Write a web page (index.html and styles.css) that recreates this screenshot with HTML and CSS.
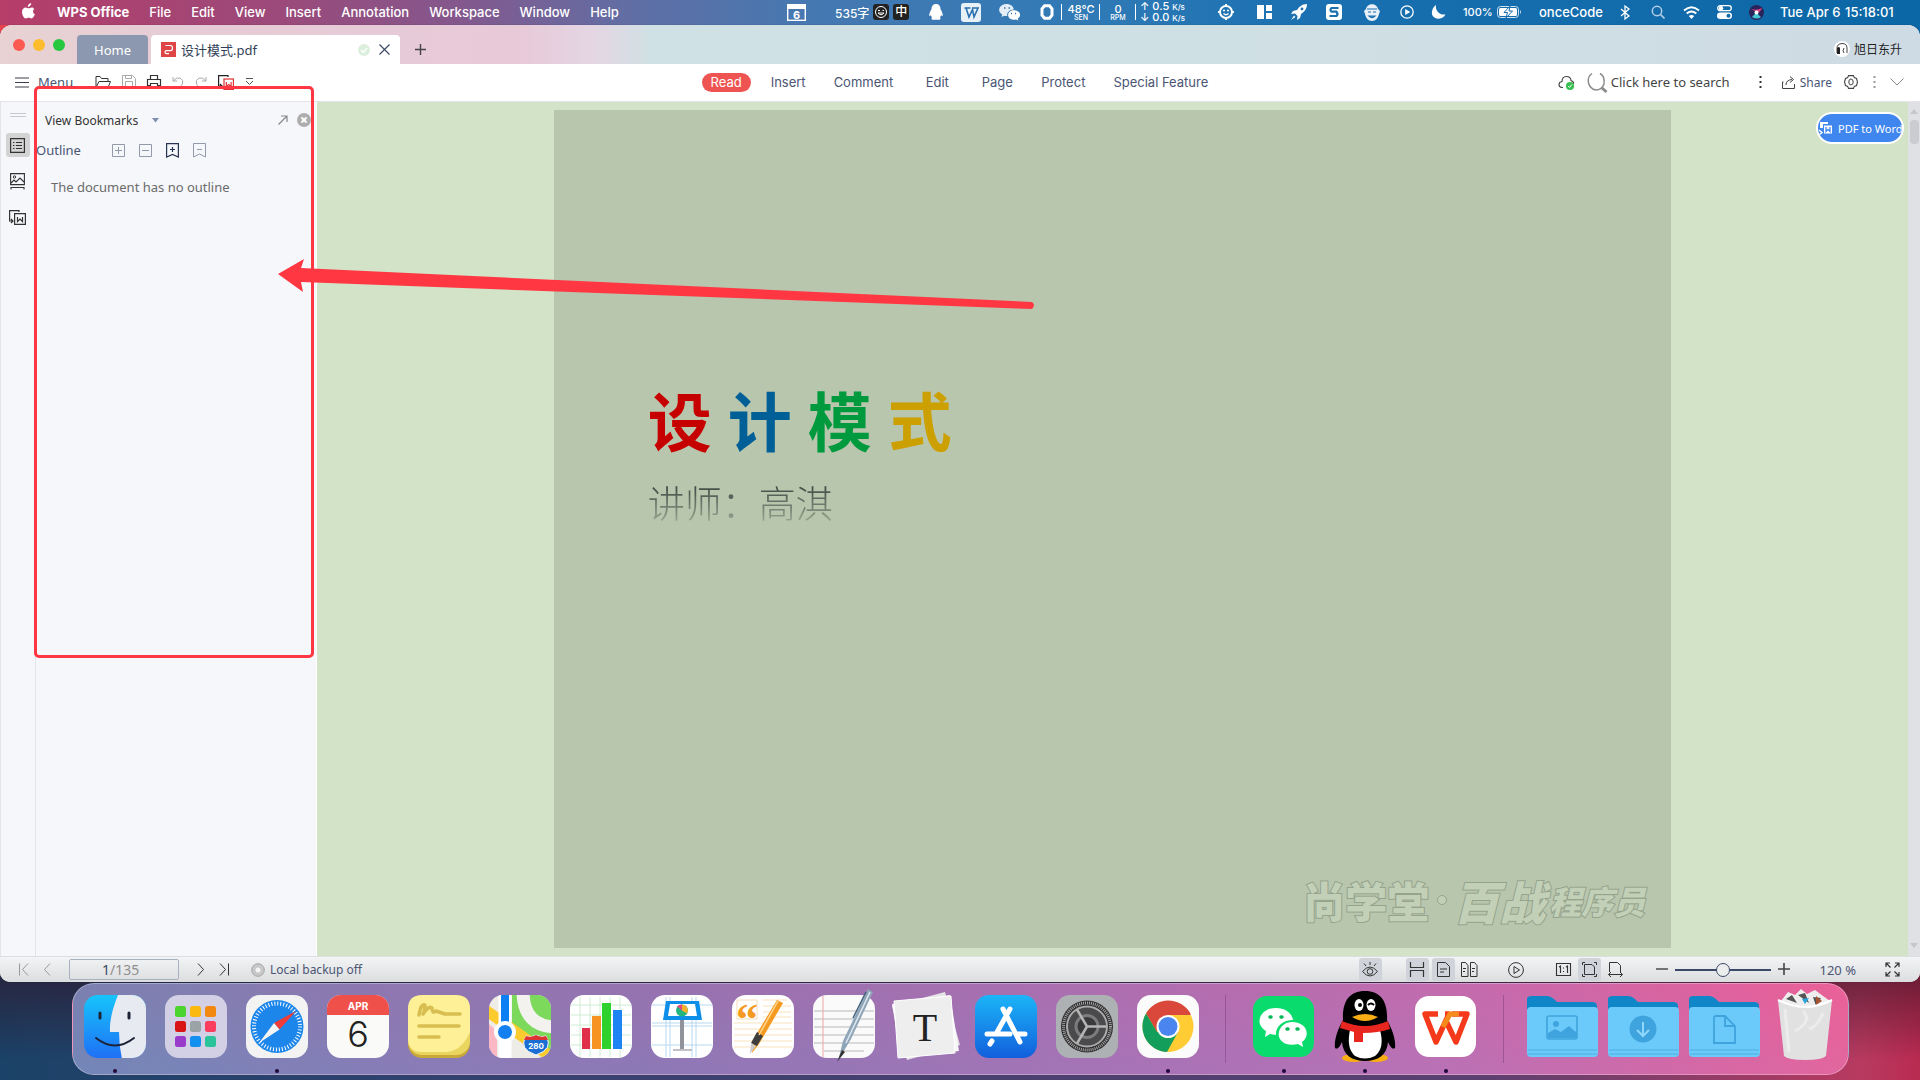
FILE: index.html
```html
<!DOCTYPE html>
<html lang="en">
<head>
<meta charset="utf-8">
<title>设计模式.pdf - WPS Office</title>
<link rel="stylesheet" href="styles.css">
</head>
<body>
<div class="desktop">
<header class="menubar">
  <nav class="app-menu">
    <svg class="apple" width="15" height="18" viewBox="0 0 15 18"><path fill="#fff" d="M10.2 0c.1 1-.3 1.900-.9 2.600C8.700 3.400 7.800 3.900 6.900 3.800c-.1-.9.300-1.900.9-2.500C8.400.600 9.400.100 10.200 0zM13.200 6c-1.800 1.200-1.600 4.200.6 5.200-.4 1.300-1.700 4.200-3.300 4.300-1.100 0-1.500-.7-2.800-.7s-1.700.7-2.800.7C2.900 15.500 1 11.900 1 9c0-3 1.900-4.600 3.700-4.600 1.200 0 2.100.8 3 .8.800 0 1.900-.9 3.300-.8.900 0 1.700.5 2.200 1.600z"/></svg>
    <b>WPS Office</b><span>File</span><span>Edit</span><span>View</span><span>Insert</span><span>Annotation</span><span>Workspace</span><span>Window</span><span>Help</span>
  </nav>
  <div class="tray">
    <svg width="19" height="17" viewBox="0 0 19 17"><rect x=".7" y=".7" width="17.600" height="15.600" fill="none" stroke="#fff" stroke-width="1.400"/><path fill="#fff" d="M1 1h17v4H1z"/><text x="9.500" y="14.500" class="cal-num">6</text></svg>
    <span class="words">535字<svg width="16" height="16" viewBox="0 0 16 16"><rect width="16" height="16" rx="3" fill="#222"/><circle cx="8" cy="8" r="5.500" fill="none" stroke="#fff"/><path d="M5 6.500h2M9.500 6.500h1.500M5 9q3 3.500 6 0z" stroke="#fff" fill="none"/></svg><i>中</i></span>
    <svg width="14" height="16" viewBox="0 0 14 16"><path fill="#fff" d="M7 0c3 0 4.500 2 4.500 5 1 2 2.500 4.500 2.300 6.500-.4.800-1 .3-1.600-.6-.2 1.300-.8 2-1.300 2.600 1 .6.900 2.300-.9 2.300H4c-1.800 0-1.900-1.700-.9-2.300-.5-.6-1.100-1.300-1.300-2.600-.6.900-1.200 1.400-1.600.6C0 9.500 1.500 7 2.500 5 2.500 2 4 0 7 0z"/></svg>
    <svg width="20" height="19" viewBox="0 0 20 19"><rect width="20" height="19" rx="3" fill="#e9f1f8"/><path d="M3.500 5h6M5 5l3 9 3.500-7.500L13 14l4-9h-6" fill="none" stroke="#286fae" stroke-width="1.600"/></svg>
    <svg width="21" height="17" viewBox="0 0 21 17"><path fill="#e5eef7" d="M7.500 0c4 0 7 2.500 7.300 5.400-4 0-7.200 2.800-6.600 6.600-1 .2-2 0-3-.3L2.500 13l.7-2.400C-2.500 7 .3 0 7.500 0z"/><path fill="#fff" d="M14.500 6.300c7 0 8.500 5.700 4.300 8.200l.5 2-2.300-1c-10 2-10-9.200-2.500-9.200z"/><path d="M5 4h1.500M9.500 4H11M12 9.500h1M16 9.500h1" stroke="#3778b4" stroke-width="1.500"/></svg>
    <svg width="14" height="16" viewBox="0 0 14 16"><path d="M4.500 1.700h5l2.500 3v6.500l-2.500 3h-5l-2.500-3V4.700z" fill="none" stroke="#fff" stroke-width="3"/></svg>
    <span class="meter"><b>48°C</b><small>SEN</small></span>
    <span class="meter"><b>0</b><small>RPM</small></span>
    <span class="meter net"><b>↑ 0.5 <em>K/s</em></b><b>↓ 0.0 <em>K/s</em></b></span>
    <svg width="16" height="16" viewBox="0 0 16 16"><circle cx="8" cy="8" r="6" fill="none" stroke="#fff" stroke-width="2"/><path d="M8 0v3M8 13v3M0 8h3M13 8h3" stroke="#fff" stroke-width="2"/><path d="M5 6.500h2M9 6.500h2M5.500 9.500q2.500 2.500 5 0" stroke="#fff" fill="none" stroke-width="1.300"/></svg>
    <svg width="15" height="14" viewBox="0 0 15 14"><path fill="#fff" d="M0 0h7v14H0zM9 0h6v6H9zM9 8h6v6H9z"/></svg>
    <svg width="16" height="16" viewBox="0 0 16 16"><path fill="#fff" d="M16 0c-5 0-8 3-10 6L2 7l-2 3 4-.5L6.500 12 6 16l3-2 1-4c3-2 6-5 6-10zM3 11.500L0 16l4.500-3z"/><circle cx="11" cy="5" r="1.400" fill="#2071b1"/></svg>
    <svg width="16" height="16" viewBox="0 0 16 16"><rect width="16" height="16" rx="3" fill="#fff"/><path d="M12.500 4H5.500Q3.500 6 5.500 7.700h5Q12.500 10 10.500 12H3.500" fill="none" stroke="#1c70b0" stroke-width="2.200"/></svg>
    <svg width="16" height="17" viewBox="0 0 16 17"><path fill="#e8f1f8" d="M2 5C3-1.500 13-1.500 14 5l2 2-1 3c-1 4-3 7-7 7s-6-3-7-7L0 7z"/><path d="M3 5h10M4 8h3M9 8h3M5 12q3 3 6 0z" fill="none" stroke="#1c70b0" stroke-width="1.200"/></svg>
    <svg width="14" height="14" viewBox="0 0 14 14"><circle cx="7" cy="7" r="6.200" fill="none" stroke="#fff" stroke-width="1.300"/><path fill="#fff" d="M5.200 4l5 3-5 3z"/></svg>
    <svg width="14" height="14" viewBox="0 0 14 14"><path fill="#fff" d="M4 0C3 5 7 10.500 13.500 9.500 9 17-3 14 .5 4.500 1.300 2.500 2.500 1 4 0z"/></svg>
    <span class="small">100%</span>
    <svg width="25" height="12" viewBox="0 0 25 12"><rect x=".5" y=".5" width="21" height="11" rx="3" fill="none" stroke="#cfe1ef"/><rect x="2" y="2" width="18" height="8" rx="1.500" fill="#fff"/><path d="M13 0L7 6.500h3.500L9 12l6.500-7H12z" fill="#fff" stroke="#176cad"/><path d="M23 4v4q2-2 0-4" fill="#cfe1ef"/></svg>
    <span>onceCode</span>
    <svg width="10" height="15" viewBox="0 0 10 15"><path d="M1 4l8 7-4 3V1l4 3-8 7" fill="none" stroke="#fff" stroke-width="1.300"/></svg>
    <svg width="14" height="14" viewBox="0 0 14 14"><circle cx="6" cy="6" r="4.700" fill="none" stroke="#b5d0e5" stroke-width="1.500"/><path d="M9.500 9.500l4 4" stroke="#b5d0e5" stroke-width="1.700"/></svg>
    <svg width="17" height="13" viewBox="0 0 17 13"><path d="M1 4.500q7.500-6.500 15 0M3.700 7.500q4.800-4 9.600 0" fill="none" stroke="#fff" stroke-width="2"/><path fill="#fff" d="M5.800 10q2.700-2 5.400 0L8.500 13z"/></svg>
    <svg width="15" height="14" viewBox="0 0 15 14"><rect x=".7" y=".7" width="13.600" height="5" rx="2.500" fill="none" stroke="#fff" stroke-width="1.300"/><circle cx="4" cy="3.200" r="2.200" fill="#fff"/><rect y="7.500" width="15" height="6.500" rx="3.200" fill="#fff"/><circle cx="11.500" cy="10.700" r="2" fill="#1069a9"/></svg>
    <svg width="15" height="15" viewBox="0 0 15 15"><circle cx="7.500" cy="7.500" r="7.500" fill="#29245b"/><path d="M2 4q6 2 11-1-2 5-5 4z" fill="#e64482"/><path d="M3 12q3-3 4.500-5Q9 10 12 12q-4 3-9 0z" fill="#45c8d4"/><circle cx="7.500" cy="7.500" r="2" fill="#fff"/></svg>
    <span>Tue Apr 6</span><span>15:18:01</span>
  </div>
</header>

<main class="window">
  <div class="tabs">
    <div class="lights"><i class="close"></i><i class="min"></i><i class="max"></i></div>
    <button class="tab home">Home</button>
    <div class="tab current">
      <svg width="15" height="15" viewBox="0 0 15 15"><rect width="15" height="15" fill="#e04545"/><path d="M4.500 3.500h5q2 0 2 2.600t-2 2.600H5.500q-1.500 0-1.500 1.500t1.500 1.500H8" fill="none" stroke="#fff" stroke-width="1.200"/></svg>
      <span>设计模式.pdf</span>
      <svg class="ok" width="12" height="12" viewBox="0 0 12 12"><circle cx="6" cy="6" r="6" fill="#dcefdc"/><path d="M3 6l2.300 2.300L9 4" fill="none" stroke="#fff" stroke-width="1.400"/></svg>
      <button class="icon" aria-label="Close tab"><svg width="11" height="11" viewBox="0 0 11 11"><path d="M.5.5l10 10M10.500.5l-10 10" stroke="#3d4966" stroke-width="1.200"/></svg></button>
    </div>
    <button class="icon plus" aria-label="New tab"><svg width="11" height="11" viewBox="0 0 11 11"><path d="M5.500 0v11M0 5.500h11" stroke="#444" stroke-width="1.400"/></svg></button>
    <div class="user"><svg width="16" height="16" viewBox="0 0 16 16"><circle cx="8" cy="8" r="8" fill="#fff"/><path d="M3 12V7q0-4 5-4.500 5 0 5 4.500v5M10 12q-2-2 0-5" stroke="#444" fill="none"/><path d="M3 7q2-2 3 0v6H3z" fill="#222"/></svg>旭日东升</div>
  </div>

  <div class="toolbar">
    <div class="quick">
      <button class="icon menu"><svg width="14" height="11" viewBox="0 0 14 11"><path d="M0 1h14M0 5.500h14M0 10h14" stroke="#3b3f4a" stroke-width="1.200"/></svg>Menu</button>
      <button class="icon" aria-label="Open"><svg width="16" height="14" viewBox="0 0 16 14"><path d="M1 12.500V1.500h4l1.500 2H13v3M1 12.500L4 6.500h11.500L13 12.500z" fill="none" stroke="#333"/></svg></button>
      <button class="icon" aria-label="Save"><svg width="14" height="14" viewBox="0 0 14 14"><path d="M.5 13.500V.5h10l3 3v10zM3.500 13V6.500h7V13M3.500.5v3h6v-3" fill="none" stroke="#aaa"/></svg></button>
      <button class="icon" aria-label="Print"><svg width="14" height="14" viewBox="0 0 14 14"><path d="M3.500 4V.5h7V4M3 10.500H.5v-6h13v6H11M3.500 8.500h7v5h-7z" fill="none" stroke="#333" stroke-width="1.200"/></svg></button>
      <button class="icon" aria-label="Undo"><svg width="12" height="12" viewBox="0 0 12 12"><path d="M1 1v4h4M1 5q3-4 7-3 4 2 2.500 6L8 11" fill="none" stroke="#aaa"/></svg></button>
      <button class="icon" aria-label="Redo"><svg width="12" height="12" viewBox="0 0 12 12"><path d="M11 1v4H7M11 5Q8 1 4 2 0 4 1.500 8L4 11" fill="none" stroke="#aaa"/></svg></button>
      <button class="icon" aria-label="PDF to Word"><svg width="16" height="15" viewBox="0 0 16 15"><path d="M10 2V.6H.6V11H4M2 9l2 2-2 2" fill="none" stroke="#222" stroke-width="1.200"/><rect x="6" y="4" width="9.400" height="10.400" fill="#fff" stroke="#d33" stroke-width="1.200"/><path d="M8.300 7v4.500l2.400-2 2.400 2V7" fill="none" stroke="#d33" stroke-width="1.200"/></svg></button>
      <button class="icon" aria-label="More"><svg width="9" height="8" viewBox="0 0 9 8"><path d="M1 .5h7M1 3l3.500 3.500L8 3" fill="none" stroke="#555"/></svg></button>
    </div>
    <nav class="ribbon">
      <button class="on">Read</button><button>Insert</button><button>Comment</button><button>Edit</button><button>Page</button><button>Protect</button><button>Special Feature</button>
    </nav>
    <div class="tools">
      <svg width="17" height="15" viewBox="0 0 17 15"><path d="M5 12.500H4C0 12 0 7 4 6.500 4 0 12.500 0 13 5.500q3 1 2.500 3.500" fill="none" stroke="#444" stroke-width="1.100"/><circle cx="12" cy="11" r="4" fill="#35c050"/><path d="M10.200 11l1.300 1.500 2.400-3" stroke="#fff" fill="none"/></svg>
      <label class="search"><svg width="21" height="21" viewBox="0 0 21 21"><path d="M5 1.500Q0 5 1.500 11t7.500 7q6 0 8-6 1-8-4-10.500" fill="none" stroke="#8b8b8b" stroke-width="1.500"/><path d="M15 16l4.500 4" stroke="#8b8b8b" stroke-width="3"/></svg><input type="text" value="Click here to search"></label>
      <svg class="dots" width="3" height="14" viewBox="0 0 3 14"><path d="M1.500 1v12" stroke="#333" stroke-width="2" stroke-dasharray="2 3"/></svg>
      <button class="icon share"><svg width="14" height="13" viewBox="0 0 14 13"><path d="M1.500 6H.5v6.500h12V8M4 9q0-5 6-5.500M8 .5l3.500 3L8 6.500" fill="none" stroke="#444"/></svg>Share</button>
      <button class="icon" aria-label="Settings"><svg width="14" height="14" viewBox="0 0 14 14"><path d="M4.500.6h5l.8 2 2.200.9 1 3.500-1 3.500-2.200.9-.8 2h-5l-.8-2-2.200-.9-1-3.500 1-3.500 2.200-.9z" fill="none" stroke="#444" stroke-width="1.100"/><ellipse cx="7" cy="7" rx="2.200" ry="3" fill="none" stroke="#444"/></svg></button>
      <svg class="more" width="3" height="12" viewBox="0 0 3 12"><path d="M1.500 0v12" stroke="#999" stroke-width="2" stroke-dasharray="2 3"/></svg>
      <button class="icon" aria-label="Collapse"><svg width="14" height="8" viewBox="0 0 14 8"><path d="M.5.5L7 7 13.500.5" fill="none" stroke="#888"/></svg></button>
    </div>
  </div>

  <div class="content">
    <aside class="rail">
      <svg class="grip" width="16" height="4" viewBox="0 0 16 4"><path d="M0 .5h16M0 3.500h16" stroke="#c6c9cf"/></svg>
      <button class="icon on" aria-label="Bookmarks"><svg width="15" height="15" viewBox="0 0 15 15"><path d="M.6.6h13.800v13.800H.6zM3 4.500h1.500M6 4.500h6M3 7.500h1.500M6 7.500h6M3 10.500h1.500M6 10.500h6" fill="none" stroke="#333" stroke-width="1.200"/></svg></button>
      <button class="icon" aria-label="Thumbnails"><svg width="15" height="17" viewBox="0 0 15 17"><path d="M.6.600h13.800v11H.6zM1 10l3-3 2 2 4-4 4 4M1 16.500v-2h13v2" fill="none" stroke="#333" stroke-width="1.100"/><circle cx="4.500" cy="4" r="1.200" fill="none" stroke="#333"/></svg></button>
      <button class="icon" aria-label="Convert"><svg width="17" height="15" viewBox="0 0 17 15"><path d="M10 2V.6H.6V11H4M2 9l2 2-2 2M5.600 3.600h10.800v10.800H5.600zM8.500 7v4.500l2.500-2.500 2.500 2.500V7" fill="none" stroke="#333" stroke-width="1.200"/></svg></button>
    </aside>
    <aside class="panel">
      <div class="panel-head">
        <span>View Bookmarks</span>
        <svg class="caret" width="7" height="5" viewBox="0 0 7 5"><path d="M0 0h7L3.500 4.500z" fill="#7f8fb0"/></svg>
        <svg class="pop" width="10" height="10" viewBox="0 0 10 10"><path d="M.5 9.500l8-8M3 1h6v6" fill="none" stroke="#888" stroke-width="1.200"/></svg>
        <svg width="14" height="14" viewBox="0 0 14 14"><circle cx="7" cy="7" r="7" fill="#aeaeae"/><path d="M4.500 4.500l5 5M9.500 4.500l-5 5" stroke="#fff" stroke-width="2"/></svg>
      </div>
      <div class="panel-tools">
        <span>Outline</span>
        <button class="icon" aria-label="Expand"><svg width="13" height="13" viewBox="0 0 13 13"><path d="M.5.5h12v12H.5zM6.500 3v7M3 6.500h7" fill="none" stroke="#9299a8"/></svg></button>
        <button class="icon" aria-label="Collapse"><svg width="13" height="13" viewBox="0 0 13 13"><path d="M.5.5h12v12H.5zM3 6.500h7" fill="none" stroke="#9299a8"/></svg></button>
        <button class="icon" aria-label="Add bookmark"><svg width="13" height="15" viewBox="0 0 13 15"><path d="M.600.600h11.800v13.400L6.500 11.500.6 14zM6.500 4v5M4 6.500h5" fill="none" stroke="#283453" stroke-width="1.200"/></svg></button>
        <button class="icon" aria-label="Remove bookmark"><svg width="13" height="15" viewBox="0 0 13 15"><path d="M.5.5h12V14l-6-3-6 3zM4 6.500h5" fill="none" stroke="#9299a8"/></svg></button>
      </div>
      <p>The document has no outline</p>
    </aside>
    <section class="viewer">
      <article class="sheet">
        <div>
          <h1><span class="c1">设</span><span class="c2">计</span><span class="c3">模</span><span class="c4">式</span></h1>
          <h2>讲师：高淇</h2>
        </div>
        <div class="mark"><span>尚学堂</span><i class="dot"></i><em>百战</em><em class="lesser">程序员</em></div>
      </article>
      <button class="convert"><svg width="16" height="15" viewBox="0 0 16 15"><path d="M2 7V1h8v2H5v4z" fill="#fff"/><path d="M1 9l3 2.500L1 14" fill="none" stroke="#fff" stroke-width="1.400"/><path d="M5.500 4h9v9h-9z" fill="#fff" stroke="#3f86ee"/><path d="M8 6v4.500l2-2 2 2V6" fill="none" stroke="#3f86ee" stroke-width="1.300"/></svg>PDF to Word</button>
    </section>
    <div class="scroll">
      <svg width="8" height="5" viewBox="0 0 8 5"><path d="M0 5l4-5 4 5z" fill="#c6c7cb"/></svg>
      <i></i>
      <svg width="8" height="5" viewBox="0 0 8 5"><path d="M0 0l4 5 4-5z" fill="#c6c7cb"/></svg>
    </div>
  </div>

  <footer class="status">
    <button class="icon" aria-label="First page"><svg width="10" height="13" viewBox="0 0 10 13"><path d="M.5.5v12M9 .5l-5.500 6 5.500 6" fill="none" stroke="#999"/></svg></button>
    <button class="icon prev" aria-label="Previous page"><svg width="8" height="13" viewBox="0 0 8 13"><path d="M7 .5l-5.500 6 5.500 6" fill="none" stroke="#999"/></svg></button>
    <label class="pager"><input type="text" value="1" aria-label="Page"><span>/135</span></label>
    <button class="icon next" aria-label="Next page"><svg width="8" height="13" viewBox="0 0 8 13"><path d="M1 .5l5.500 6-5.500 6" fill="none" stroke="#333"/></svg></button>
    <button class="icon last" aria-label="Last page"><svg width="10" height="13" viewBox="0 0 10 13"><path d="M9.500.5v12M1 .5l5.500 6-5.500 6" fill="none" stroke="#333"/></svg></button>
    <svg class="disc" width="14" height="14" viewBox="0 0 14 14"><circle cx="7" cy="7" r="6.300" fill="#c8c8c8" stroke="#a5a5a5"/><circle cx="7" cy="7" r="2.500" fill="#f4f4f4"/></svg>
    <span>Local backup off</span>
    <div class="views">
      <button class="icon on" aria-label="Eye care"><svg width="16" height="15" viewBox="0 0 16 15"><path d="M.5 9.500q7.500-9 15 0-7.500 9-15 0zM8 0v3M2 1.500l2 2.500M14 1.500L12 4" fill="none" stroke="#333"/><circle cx="8" cy="9.500" r="2.800" fill="none" stroke="#333"/></svg></button>
      <button class="icon on" aria-label="Continuous"><svg width="14" height="15" viewBox="0 0 14 15"><path d="M.5 0v5.500h13V0M.5 15V8.500h13V15" fill="none" stroke="#333" stroke-width="1.200"/></svg></button>
      <button class="icon on" aria-label="Single page"><svg width="13" height="15" viewBox="0 0 13 15"><path d="M.5.500h8l4 4v10H.5zM3 7h7M3 10h4" fill="none" stroke="#333"/></svg></button>
      <button class="icon" aria-label="Two pages"><svg width="17" height="15" viewBox="0 0 17 15"><path d="M.5.500h4l2.500 3v11H.5zM9.500.500h4l2.500 3v11H9.500zM2 6.500h3M2 9.500h2M11 6.500h3M11 9.500h2" fill="none" stroke="#333"/></svg></button>
      <button class="icon" aria-label="Play"><svg width="16" height="16" viewBox="0 0 16 16"><circle cx="8" cy="8" r="7.400" fill="none" stroke="#333"/><path d="M6 4.500l5.500 3.500L6 11.500z" fill="none" stroke="#333"/></svg></button>
      <button class="icon" aria-label="Actual size"><svg width="15" height="13" viewBox="0 0 15 13"><path d="M.5.500h14v12H.5zM3 4l1.500-1v7M10 4l1.500-1v7M7.500 4.500v1M7.500 8v1" fill="none" stroke="#333" stroke-width="1.100"/></svg></button>
      <button class="icon on" aria-label="Fit page"><svg width="15" height="15" viewBox="0 0 15 15"><path d="M2.500 2.500h7.500l2.500 2.500v7.500h-10zM.5 3V.5H3M12 .5h2.500V3M14.500 12v2.500H12M3 14.500H.5V12" fill="none" stroke="#333"/></svg></button>
      <button class="icon" aria-label="Fit width"><svg width="15" height="15" viewBox="0 0 15 15"><path d="M1.500 10V.5h8l3 3V10M.5 12.500h14M3 10l-2.500 2.500L3 15M12 10l2.500 2.500L12 15" fill="none" stroke="#333"/></svg></button>
      <button class="icon" aria-label="Zoom out"><svg width="12" height="12" viewBox="0 0 12 12"><path d="M0 5h12" stroke="#555" stroke-width="1.600"/></svg></button>
      <input type="range" min="0" max="100" value="50" aria-label="Zoom">
      <button class="icon" aria-label="Zoom in"><svg width="12" height="12" viewBox="0 0 12 12"><path d="M0 5h12M6-1v12" stroke="#444" stroke-width="1.600"/></svg></button>
      <span>120 %</span>
      <button class="icon" aria-label="Full screen"><svg width="15" height="15" viewBox="0 0 15 15"><path d="M1 5V1h4M1 1l4.500 4.500M10 1h4v4M14 1L9.500 5.500M1 10v4h4M1 14l4.500-4.500M14 10v4h-4M14 14L9.500 9.500" fill="none" stroke="#333" stroke-width="1.200"/></svg></button>
    </div>
  </footer>
</main>

<div class="dock">
  <div class="app run"><svg viewBox="0 0 64 64"><defs><linearGradient id="fb" x2="0" y2="1"><stop stop-color="#17c4fb"/><stop offset="1" stop-color="#1f6ff5"/></linearGradient><clipPath id="sq"><rect x="1" width="62" height="63" rx="14"/></clipPath></defs><g clip-path="url(#sq)"><path fill="url(#fb)" d="M0 0h64v64H0z"/><path fill="#e7eaf1" d="M35 0Q26 22 27 37h9q0 14 3 27h25V0z"/></g><path d="M17 18v5M46 18v5" stroke="#1d2438" stroke-width="3" stroke-linecap="round"/><path d="M13 43q19 15 38 0" fill="none" stroke="#1d2438" stroke-width="2" stroke-linecap="round"/></svg></div>
  <div class="app"><svg viewBox="0 0 64 64"><rect x="1" width="62" height="63" rx="14" fill="#d3cfe4"/><g><rect x="11" y="11" width="11" height="11" rx="2.500" fill="#4bd32f"/><rect x="26" y="11" width="11" height="11" rx="2.500" fill="#fbb90d"/><rect x="41" y="11" width="11" height="11" rx="2.500" fill="#f2880f"/><rect x="11" y="26" width="11" height="11" rx="2.500" fill="#d81414"/><rect x="26" y="26" width="11" height="11" rx="2.500" fill="#9ba3a6"/><rect x="41" y="26" width="11" height="11" rx="2.500" fill="#fb3d5f"/><rect x="11" y="41" width="11" height="11" rx="2.500" fill="#9a3ccb"/><rect x="26" y="41" width="11" height="11" rx="2.500" fill="#1190ef"/><rect x="41" y="41" width="11" height="11" rx="2.500" fill="#2bc39a"/></g></svg></div>
  <div class="app run"><svg viewBox="0 0 64 64"><rect x="1" width="62" height="63" rx="14" fill="#f3f3f4"/><circle cx="32" cy="31.500" r="26.500" fill="#1c86ea"/><circle cx="32" cy="31.500" r="23" fill="none" stroke="#fff" stroke-width="4" stroke-dasharray="1 2"/><path fill="#ef3c38" d="M51 16L29 28l5.500 6.500z"/><path fill="#f4f4f4" d="M14 48l15-20 5.500 6.500z"/></svg></div>
  <div class="app"><svg viewBox="0 0 64 64"><g clip-path="url(#sq)"><path fill="#fafaf8" d="M0 0h64v64H0z"/><path fill="#f0504a" d="M0 0h64v20H0z"/></g><text x="32" y="15" class="apr">APR</text><text x="32" y="52" class="day">6</text></svg></div>
  <div class="app"><svg viewBox="0 0 64 64"><rect x="1" y="2" width="62" height="61" rx="14" fill="#c9a83a"/><rect x="1" y="1" width="62" height="59" rx="14" fill="#ead55f"/><path d="M15 0h34q14 0 14 14v23q-8 19-24 20H15Q1 57 1 43V14Q1 0 15 0z" fill="#fdf096"/><path d="M12 20q2-12 6-10 0 6-2 9 6-9 9-6 0 6 4 3l9 3h15M12 31h40M12 42h20" fill="none" stroke="#d8bd50" stroke-width="3.500" stroke-linecap="round" stroke-linejoin="round"/></svg></div>
  <div class="app"><svg viewBox="0 0 64 64"><g clip-path="url(#sq)"><path fill="#eeece6" d="M0 0h64v64H0z"/><path fill="#7cd95b" d="M24 0h40v64L24 32z"/><path d="M35-4q0 36 34 36" fill="none" stroke="#f3f2ef" stroke-width="13"/><path d="M-4 14l70 50" stroke="#fccb2d" stroke-width="11"/><path fill="#fbb8c4" d="M0 28l9 8v28H0z"/><path d="M17 0v64" stroke="#fff" stroke-width="13"/><path d="M17 0v36" stroke="#0c7ff2" stroke-width="8"/></g><circle cx="17" cy="37" r="9" fill="#1480f0" stroke="#fff" stroke-width="4"/><path d="M38 41q5 2 10-1 5 3 10 1 8 13-10 19-18-6-10-19z" fill="#1b6fd3" stroke="#fff"/><path fill="#dc3434" d="M38 41q5 2 10-1 5 3 10 1l2 4H36z"/><text x="48" y="54" class="road">280</text></svg></div>
  <div class="app"><svg viewBox="0 0 64 64"><rect x="1" width="62" height="63" rx="14" fill="#fff"/><path d="M2 10h60M2 20h60M2 30h60M2 40h60M2 50h60M11 2v60M21 2v60M31 2v60M41 2v60M51 2v60" stroke="#cdecd0"/><path fill="#e02f49" d="M13 33h8v21h-8z"/><path fill="#f79320" d="M23 21h9v33h-9z"/><path fill="#2fd22c" d="M33 8h9v46h-9z"/><path fill="#1e83f3" d="M44 15h9v39h-9z"/></svg></div>
  <div class="app"><svg viewBox="0 0 64 64"><rect x="1" width="62" height="63" rx="14" fill="#fff"/><path d="M2 10h60M2 28h60M2 31h60M2 50h60M16 2v60M20 2v60M42 2v60M46 2v60" stroke="#b7d8ef"/><path fill="#90939a" d="M30 25h4v29h-4z"/><path fill="#bfc1c6" d="M23 54h19v2H23z"/><path fill="#0d8ee9" d="M16 6h33l3 19H13z"/><path fill="#fff" d="M20 9h25l2 12H18z"/><circle cx="32" cy="15.500" r="6" fill="#24b47e"/><path fill="#f5b02d" d="M32 15.500v-6a6 6 0 0 1 5 9z"/><path fill="#e44a7c" d="M32 15.500l-5-4a6 6 0 0 1 5-2z"/></svg></div>
  <div class="app"><svg viewBox="0 0 64 64"><rect x="1" width="62" height="63" rx="14" fill="#fff"/><path d="M3 28h58M3 34h58M3 40h58M3 46h58M3 52h58M32 5h24M32 11h28M32 17h28M32 22h28" stroke="#fae2bd"/><path d="M6 5h20v19H6z" fill="none" stroke="#f7dcb8"/><text x="16" y="39" class="quote">“</text><path d="M46 5l6 3-24 41-7 9 1-13z" fill="#f59a20"/><path d="M26 37l6 4-6 10-6-3z" fill="#3d3d3d"/><path d="M20 48l5 3-6 8z" fill="#ccc"/><path d="M47 6L28 40" stroke="#ffd78f" stroke-width="1.500"/></svg></div>
  <div class="app"><svg viewBox="0 0 64 64"><rect x="1" width="62" height="63" rx="14" fill="#fafafa"/><path d="M2 16h60M2 24h60M2 32h60M2 40h60M2 48h60M12 56h40" stroke="#b9b9b9"/><path d="M11 1v61" stroke="#f0a5a5"/><path d="M56-6l5 3-22 47-13 22 5-20z" fill="#8fa5b8"/><path d="M58-3L34 48" stroke="#dfe8ef" stroke-width="1.500"/><path d="M30 55l3 2-8 10z" fill="#333"/><path d="M54-3L41 23" stroke="#47647e" stroke-width="1.500"/></svg></div>
  <div class="app"><svg viewBox="0 0 64 64"><path fill="#e4e4e6" d="M-1 11l53-14 15 53-53 15z"/><path fill="#f7f7f7" d="M-1 9L57 0l9 56-58 7z"/><path fill="#eee" stroke="#fff" d="M1 6l57-5 4 57-57 5z"/><text x="32" y="46" class="tee">T</text></svg></div>
  <div class="app"><svg viewBox="0 0 64 64"><defs><linearGradient id="as" x2="0" y2="1"><stop stop-color="#1bb5f8"/><stop offset="1" stop-color="#125fdc"/></linearGradient></defs><rect x="1" width="62" height="63" rx="14" fill="url(#as)"/><path d="M36 14L22 39M29 14l17 33M13 39h23M44 39h7M18 46l-2 3" stroke="#fff" stroke-width="5" stroke-linecap="round"/></svg></div>
  <div class="app"><svg viewBox="0 0 64 64"><rect x="1" width="62" height="63" rx="14" fill="#aeb1b3"/><circle cx="32" cy="31.500" r="26" fill="#2e2e30"/><circle cx="32" cy="31.500" r="23.500" fill="none" stroke="#a5a5a5" stroke-width="3" stroke-dasharray="1 1"/><circle cx="32" cy="31.500" r="20" fill="#4a4a4c" stroke="#aaa" stroke-width="2"/><circle cx="32" cy="31.500" r="11" fill="#3a3a3c" stroke="#7c7c7e" stroke-width="3"/><path d="M32 31.500h19M32 31.500l-10-17M32 31.500l-10 17" stroke="#b5b5b5" stroke-width="2.500"/></svg></div>
  <div class="app run"><svg viewBox="0 0 64 64"><rect x="1" width="62" height="63" rx="14" fill="#fbfbfb"/><circle cx="32" cy="31.500" r="25.500" fill="#fc3"/><path fill="#d9483b" d="M10 18.500a25.500 25.500 0 0 1 44.500 0V20H32L21 37z"/><path fill="#149e5c" d="M10 18.500a25.500 25.500 0 0 0 21 38.500L42 37H21z"/><circle cx="32" cy="31.500" r="11.500" fill="#fff"/><circle cx="32" cy="31.500" r="9.500" fill="#4a86f0"/></svg></div>
  <i class="sep"></i>
  <div class="app run"><svg viewBox="0 0 64 64"><rect x="1" y="1" width="61" height="61" rx="14" fill="#09dc6c"/><path fill="#fff" d="M24 13c9 0 16 5 17 12-10 0-18 7-17 15l-6-1-5 3 1-6C1 28 9 13 24 13zM40 27c15 0 19 14 10 20l1 5-5-3c-14 3-21-5-19-12 1-6 7-10 13-10z"/><path d="M18 22h1M29 22h1M35 34h1M45 34h1" stroke="#09b85b" stroke-width="3.500" stroke-linecap="round"/></svg></div>
  <div class="app run"><svg viewBox="0 0 64 64"><ellipse cx="21" cy="63" rx="12" ry="4" fill="#f8ad14"/><ellipse cx="43" cy="63" rx="12" ry="4" fill="#f8ad14"/><path d="M32-4c16 0 23 11 22 29 5 9 9 19 8 28-3 2-5-2-7-6C54 60 45 66 32 66S10 60 9 47c-2 4-4 8-7 6-1-9 3-19 8-28C9 7 16-4 32-4z"/><path fill="#fff" d="M17 35h30q5 18-5 26-10 5-20 0-9-8-5-26z"/><ellipse cx="26" cy="10" rx="4.500" ry="6" fill="#fff"/><ellipse cx="38" cy="10" rx="4.500" ry="6" fill="#fff"/><circle cx="27" cy="10" r="2"/><path d="M35 10q3-3 6 0" fill="none" stroke="#000" stroke-width="2"/><path fill="#f8ad14" d="M19 22q13-6 26 0-13 8-26 0z"/><path fill="#e8261f" d="M9 26q23 10 46 0l2 8q-12 4-27 4v9h-9V37l-14-4z"/></svg></div>
  <div class="app run"><svg viewBox="0 0 64 64"><rect x="1" y="1" width="61" height="61" rx="14" fill="#fff"/><path d="M24 19H11l11 28 13-28h-4M38 19h15L42 47 32 26" fill="none" stroke="#f5391b" stroke-width="5.500" stroke-linejoin="round"/><path d="M29 32l7-13h9" fill="none" stroke="#f58b1c" stroke-width="5"/></svg></div>
  <i class="sep"></i>
  <div class="app"><svg viewBox="0 0 64 64"><path d="M-3 4q0-3 5-3h15q4 0 9 5l1 1h35q5 0 5 4v18H-3z" fill="#0f86c7"/><rect x="-3" y="12" width="71" height="50" rx="4" fill="#6ccafb"/><path d="M-2 55h69M-2 59h69" stroke="#4daede"/><rect x="17" y="21" width="30" height="23" rx="2" fill="none" stroke="#3fa4dd" stroke-width="1.600"/><circle cx="26" cy="29" r="3" fill="#3fa4dd"/><path fill="#3fa4dd" d="M18 43V38l7-4 6 3 8-6 8 7v5z"/></svg></div>
  <div class="app"><svg viewBox="0 0 64 64"><path d="M-3 4q0-3 5-3h15q4 0 9 5l1 1h35q5 0 5 4v18H-3z" fill="#0f86c7"/><rect x="-3" y="12" width="71" height="50" rx="4" fill="#6ccafb"/><path d="M-2 55h69M-2 59h69" stroke="#4daede"/><circle cx="32" cy="34" r="13.500" fill="#3fa4dd"/><path d="M32 27v13M26 35l6 6 6-6" fill="none" stroke="#8ed7fb" stroke-width="2"/></svg></div>
  <div class="app"><svg viewBox="0 0 64 64"><path d="M-3 4q0-3 5-3h15q4 0 9 5l1 1h35q5 0 5 4v18H-3z" fill="#0f86c7"/><rect x="-3" y="12" width="71" height="50" rx="4" fill="#6ccafb"/><path d="M-2 55h69M-2 59h69" stroke="#4daede"/><path d="M24 21h9l10 10v17H22V23q0-2 2-2zM33 21v10h10" fill="none" stroke="#3fa4dd" stroke-width="1.800"/></svg></div>
  <div class="app"><svg viewBox="0 0 64 64"><path d="M8 6l7-9 7 3 6-6 6 5 8-4 8 6 7 5-5 11H13z" fill="#eee"/><path d="M13 4l6-4 5 8zM25 0l7-2 4 10zM40 2l8 1-5 8z" fill="#555"/><path d="M29 4l7-1-4 6z" fill="#29a7dd"/><path d="M43 1l6 5-6 4z" fill="#a55335"/><path d="M5 5q27 14 54 0l-6 56q-4 4-21 4t-21-4z" fill="#e2e1e2"/><path d="M5 5q27 14 54 0" fill="none" stroke="#fff" stroke-width="2"/><path d="M12 14l4 43M30 16q10 10-8 20M50 18q-6 14-14 16" fill="none" stroke="#ececec" stroke-width="3"/></svg></div>
</div>

<div class="callout"></div>
<svg class="arrow" width="760" height="60" viewBox="0 0 760 60"><path fill="#ff3742" d="M0 20L26 5 23 14 754 48q4 3 0 7L23 28l2 10z"/></svg>
</div>
</body>
</html>
```
FILE: styles.css
```css
* { box-sizing: border-box; }
body { margin: 0; font-family: "Noto Sans", "Noto Sans CJK SC", sans-serif; font-size: 13px; color: #4a5674; }
svg { display: block; flex: none; overflow: visible; }
button, input { font: inherit; color: inherit; border: 0; background: none; padding: 0; margin: 0; }
.icon { display: flex; align-items: center; justify-content: center; flex: none; }

.desktop {
  position: relative;
  display: flex;
  flex-direction: column;
  min-height: 100vh;
  background:
    linear-gradient(90deg, #e8434f 0, #d03858 40%, #2f8fcf 43%, #0a66a5 100%) top / 100% 60px no-repeat,
    linear-gradient(180deg, #0000 920px, #30102088 980px, #0000 1060px),
    linear-gradient(90deg, #1b4268 0, #34416f 25%, #48406f 50%, #5a4070 77%, #b83a60 97%, #b92a50 100%);
}

.menubar {
  display: flex;
  justify-content: space-between;
  align-items: center;
  height: 25px;
  padding: 0 19px 1px 21px;
  font-family: Inter, "Noto Sans CJK SC", sans-serif;
  font-weight: 500;
  color: #fff;
  white-space: nowrap;
  background: linear-gradient(90deg, #b63d68 0, #9a4a7b 15%, #83588d 24%, #606fa5 33%, #4678b1 42%, #2f7ab6 57%, #1a70b0 68%, #0b67a6 100%);
}
.app-menu { display: flex; align-items: center; gap: 20px; }
.apple { margin-right: 1px; }
.app-menu b { font-weight: 700; }
.tray {
  display: grid;
  align-items: center;
  justify-items: start;
  grid-template-columns: 48px 94px 32px 38px 41px 21px 38px 36px 83px 39px 34px 35px 38px 36px 32px 31px 34px 42px 81px 31px 32px 34px 32px 31px 65px 56px;
}
.cal-num { font: 700 11px Inter, sans-serif; fill: #fff; text-anchor: middle; }
.words { display: flex; align-items: center; gap: 4px; font-size: 12px; }
.words i { width: 16px; height: 16px; border-radius: 3px; background: #222; font-style: normal; line-height: 15px; text-align: center; }
.small { font-size: 11px; }
.meter { display: flex; flex-direction: column; align-items: center; justify-content: center; width: 100%; height: 16px; padding-left: 1px; border-left: 1px solid #fff; }
.meter b { font-size: 11px; line-height: 10px; font-weight: 500; }
.meter small { font-size: 7px; line-height: 7px; }
.net { align-items: flex-start; padding-left: 4px; }
.net em { font-size: 8px; font-style: normal; }

.window { flex: 1; display: flex; flex-direction: column; border-radius: 12px 12px 10px 10px; overflow: hidden; background: #fff; box-shadow: 0 0 1px #0008; }
.tabs { display: flex; align-items: flex-end; height: 39px; background: linear-gradient(90deg, #e8d2d2 0, #e6ccd6 10%, #e8c9d8 27%, #e4d6e4 31%, #cfe1e4 34%, #cfe0e4 60%, #cfdbe4 100%); }
.lights { display: flex; gap: 8px; padding: 0 12px 13px 13px; }
.lights i { width: 12px; height: 12px; border-radius: 50%; }
.close { background: #fd5b52; }
.min { background: #fdbc2d; }
.max { background: #27c840; }
.tab { height: 29px; border-radius: 4px 4px 0 0; }
.home { width: 71px; margin-right: 3px; background: #8c98b0; color: #fff; }
.current { display: flex; align-items: center; width: 249px; padding: 0 10px; background: #fff; color: #333f58; }
.current span { margin-left: 5px; line-height: 20px; }
.ok { margin: 0 9px 0 auto; }
.plus { height: 29px; margin-left: 15px; }
.user { display: flex; align-items: center; gap: 4px; height: 31px; margin: 0 18px 0 auto; font-size: 12px; color: #222; }

.toolbar { display: grid; grid-template-columns: 1fr auto 1fr; align-items: center; height: 38px; padding: 0 16px 1px 6px; border-bottom: 1px solid #e2e4e9; }
.quick { display: flex; align-items: center; gap: 11px; padding-left: 9px; }
.menu { gap: 9px; margin-right: 11px; }
.ribbon { display: flex; align-items: center; gap: 28px; font-family: Inter, sans-serif; }
.ribbon button { min-width: 32px; height: 19px; white-space: nowrap; }
.ribbon .on { width: 49px; margin-right: -8px; border-radius: 10px; background: #ee5552; color: #fff; }
.tools { display: flex; align-items: center; justify-content: flex-end; gap: 12px; }
.search { display: flex; align-items: center; gap: 3px; color: #444; }
.search input { width: 136px; }
.dots { margin-right: 8px; }
.more { margin: 0 2px 0 3px; }
.share { gap: 4px; font-size: 12px; }

.content { flex: 1; display: flex; min-height: 0; background: #d3e3c8; }
.rail { display: flex; flex-direction: column; align-items: center; gap: 12px; width: 36px; padding: 11px 1px 0 0; border-left: 1px solid #e2e4e9; border-right: 1px solid #e2e4e9; background: #f6f7fa; }
.grip { margin-bottom: 4px; }
.rail .icon { width: 24px; height: 24px; border-radius: 3px; }
.rail .on { background: #d3d3d4; }
.panel { width: 281px; background: #f6f7fa; border-right: 1px solid #fff; }
.panel-head { display: flex; align-items: center; height: 36px; padding: 0 5px 0 9px; font-size: 12px; color: #333; }
.caret { margin: 0 auto 0 14px; }
.pop { margin-right: 9px; }
.panel-tools { display: flex; align-items: center; gap: 14px; height: 24px; }
.panel-tools span { width: 62px; }
.panel p { margin: 15px; line-height: 20px; color: #6b6b6b; }

.viewer { position: relative; flex: 1; display: flex; justify-content: center; padding: 8px 0; }
.sheet { display: flex; flex-direction: column; justify-content: space-between; height: 100%; aspect-ratio: 4 / 3; padding: 268px 26px 20px 94px; background: #b9c6ae; }
.sheet h1 { display: flex; gap: 16px; margin: 0; font: 700 64px/80px "Noto Sans CJK SC", sans-serif; }
.c1 { color: #c60000; }
.c2 { color: #005f96; }
.c3 { color: #009a3e; }
.c4 { color: #cca000; }
.sheet h2 { width: max-content; margin: 20px 0 0; font: 300 37px/48px "Noto Sans CJK SC", sans-serif; color: transparent; background: linear-gradient(180deg, #3c4741 15%, #96a48f 90%); background-clip: text; -webkit-background-clip: text; }
.mark { display: flex; align-items: center; align-self: flex-end; gap: 4px; font: 900 42px/56px "Noto Sans CJK SC", sans-serif; color: #c3d0b8; -webkit-text-stroke: 2px #94a38c; paint-order: stroke fill; white-space: nowrap; }
.mark em { font-size: 46px; }
.mark .lesser { font-size: 32px; }
.dot { width: 10px; height: 10px; margin: 0 2px 0 4px; border: 1px solid #94a38c; border-radius: 50%; background: #c3d0b8; }
.convert { position: absolute; top: 10px; right: 4px; display: flex; align-items: center; gap: 4px; width: 88px; height: 32px; border: 2px solid #fff; border-radius: 16px; background: #3f86ee; color: #fff; font-size: 11px; white-space: nowrap; overflow: hidden; }
.scroll { display: flex; flex-direction: column; align-items: center; width: 12px; padding: 7px 0 8px; background: #e0e1e5; }
.scroll i { width: 9px; height: 24px; margin: 6px 0 auto; border-radius: 4px; background: #cbccd1; }

.status { display: flex; align-items: center; height: 26px; padding: 0 20px 0 19px; border-top: 1px solid #dcdee2; background: linear-gradient(180deg, #f3f4f5, #dcdddf); font-size: 12px; }
.prev { margin-left: 14px; }
.pager { display: flex; align-items: center; width: 110px; height: 21px; margin: 0 18px; border: 1px solid #a9b0c0; border-radius: 2px; font-size: 14px; color: #8f8f8f; }
.pager input { width: 40px; height: 19px; text-align: right; color: #3b465f; }
.last { margin: 0 22px 0 14px; }
.disc { margin-right: 5px; }
.views { display: flex; align-items: center; gap: 3px; margin-left: auto; }
.views .icon { width: 23px; height: 23px; border-radius: 3px; }
.views .on { background: #d0d3d9; }
.views .icon:nth-child(1), .views .icon:nth-child(4), .views .icon:nth-child(5) { margin-right: 21px; }
.views .icon:nth-child(8) { margin-right: 25px; }
.views .icon:nth-child(9), .views .icon:nth-child(11) { width: 14px; }
.views .icon:last-child { width: 15px; }
.views span { margin: 0 26px; font-size: 13px; }
.views input { appearance: none; width: 96px; height: 15px; margin: 0 3px; }
.views input::-webkit-slider-runnable-track { height: 2px; background: #3b4968; }
.views input::-webkit-slider-thumb { appearance: none; width: 14px; height: 14px; margin-top: -6px; border: 1px solid #3b4968; border-radius: 50%; background: #eceded; }

.dock {
  display: flex;
  align-self: center;
  gap: 17px;
  height: 92px;
  margin: 1px 0 5px;
  padding: 11px 11px 0 10px;
  border: 1px solid #ffffff50;
  border-radius: 22px;
  background: linear-gradient(180deg, #c0508018, #6090d018), linear-gradient(90deg, #7486b5 0, #8b7bb5 18%, #9276b4 32%, #a872b4 55%, #c26eb3 77%, #e6639f 95%, #ee6299 100%);
}
.app { position: relative; width: 64px; height: 64px; }
.app svg { width: 64px; height: 64px; }
.run::after { content: ""; position: absolute; left: 30px; bottom: -14px; width: 4px; height: 4px; border-radius: 50%; background: #200838; }
.sep { width: 18px; height: 68px; background: linear-gradient(#80408088, #80408088) center / 1px 100% no-repeat; }
.apr { font: 700 10px Inter, sans-serif; fill: #fff; text-anchor: middle; }
.day { font: 300 36px Inter, sans-serif; fill: #222; text-anchor: middle; }
.road { font: 700 8px Inter, sans-serif; fill: #fff; text-anchor: middle; }
.quote { font: 700 44px "Liberation Serif", serif; fill: #f59a20; text-anchor: middle; }
.tee { font: 40px "Liberation Serif", serif; fill: #222; text-anchor: middle; }

.callout { position: absolute; left: 34px; top: 86px; width: 280px; height: 572px; border: 3px solid #ff3742; border-radius: 5px; pointer-events: none; }
.arrow { position: absolute; left: 278px; top: 254px; pointer-events: none; }
```
